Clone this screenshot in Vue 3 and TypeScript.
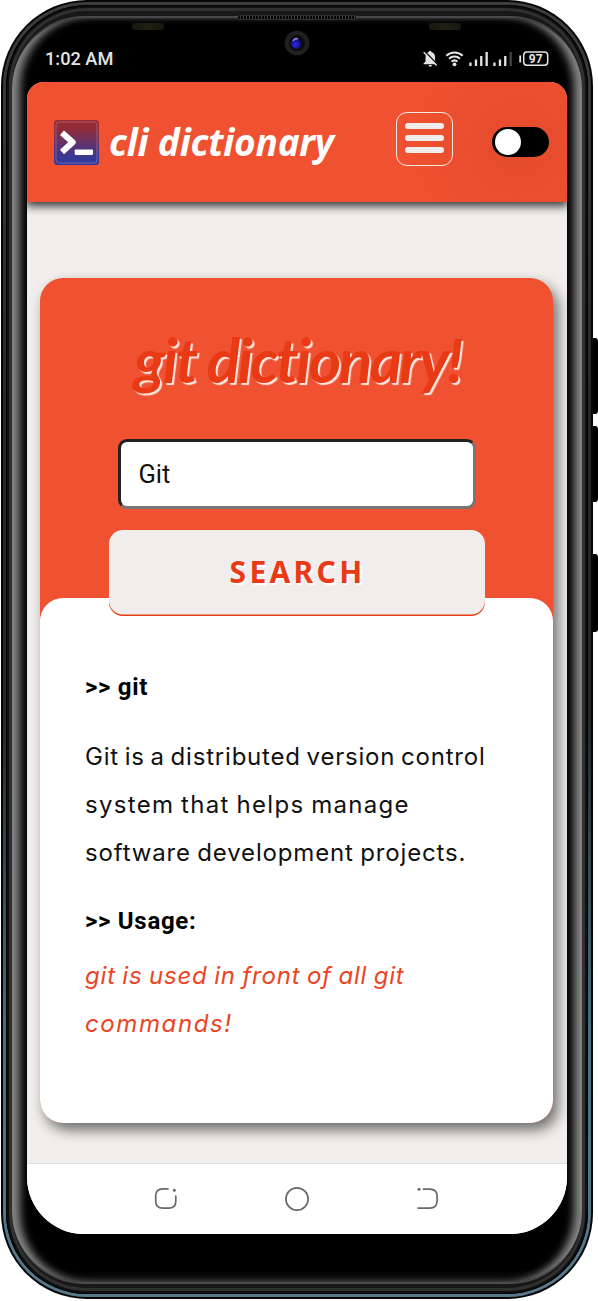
<script setup lang="ts">
import { ref } from 'vue'

const term = ref('Git')
const darkMode = ref(false)
const description: string[] = [
  'Git is a distributed version control',
  'system that helps manage',
  'software development projects.',
]
const usage: string[] = ['git is used in front of all git', 'commands!']
</script>

<template>
  <div class="stage">
    <i class="key key-up"></i>
    <i class="key key-down"></i>
    <i class="key key-power"></i>
    <div class="device">
      <div class="rim">
        <div class="groove">
          <div class="band">
            <div class="glass">
              <span class="speaker"></span>
              <span class="sensor sensor-left"></span>
              <span class="sensor sensor-right"></span>
              <svg class="camera" viewBox="0 0 26 26">
                <defs>
                  <radialGradient id="lens" cx=".4" cy=".65" r=".65">
                    <stop offset="0" stop-color="#2b2be8" />
                    <stop offset=".55" stop-color="#171596" />
                    <stop offset="1" stop-color="#07051d" />
                  </radialGradient>
                </defs>
                <circle cx="13" cy="13" r="12.3" fill="#202020" />
                <circle cx="13" cy="13" r="8" fill="#0c0c10" />
                <circle cx="12.5" cy="13" r="5.7" fill="url(#lens)" />
                <path d="M9 11a4 4 0 0 1 5-2" stroke="#8a86e0" stroke-width="1.6" fill="none" />
              </svg>
              <div class="statusbar">
                <span class="clock">1:02 AM</span>
                <svg class="status-icons" width="128" height="18" viewBox="0 0 128 18">
                  <g fill="#e4e4e4">
                    <path d="M1.500 13.600l2-2.100V7.200C3.500 4.200 5 2.600 7 2.100V1h2.300v1.100c2.400.6 3.800 2.400 3.800 5.100v4.300l2 2.100v.7H1.500zM6.600 15h3.300a1.650 1.650 0 0 1-3.300 0z" />
                    <path d="M2.800 1.400L15.500 14.500" stroke="#000" stroke-width="1.300" />
                    <path d="M1.700 2.200L14.700 15.500" stroke="#e4e4e4" stroke-width="1.300" />
                    <circle cx="32.500" cy="14.300" r="1.900" />
                    <rect x="47.300" y="12.500" width="2.300" height="3.500" />
                    <rect x="52.800" y="9.500" width="2.300" height="6.500" />
                    <rect x="58.100" y="6" width="2.300" height="10" />
                    <rect x="63.500" y="2" width="2.300" height="14" />
                    <rect x="71.300" y="12.500" width="2.300" height="3.500" />
                    <rect x="76.800" y="9.500" width="2.300" height="6.500" />
                    <rect x="82.100" y="6" width="2.300" height="10" />
                    <rect x="87.500" y="2" width="2.300" height="14" fill="#444" />
                    <rect x="97.300" y="5.500" width="1.800" height="7" />
                  </g>
                  <g fill="none" stroke="#e4e4e4" stroke-width="2">
                    <path d="M24.300 5.800a12 12 0 0 1 16.400 0" />
                    <path d="M27 8.700a8.300 8.300 0 0 1 11 0" />
                    <path d="M29.500 11.600a4.700 4.700 0 0 1 6 0" />
                    <rect x="101.700" y="2" width="24" height="13.300" rx="3.200" stroke-width="1.500" />
                  </g>
                  <text x="113.700" y="12.800" class="battery">97</text>
                </svg>
              </div>

              <div class="screen">
                <header class="topbar">
                  <svg class="logo" width="45" height="45" viewBox="0 0 45 45">
                    <defs>
                      <linearGradient id="logo-fill" x1="0" y1="0" x2="0" y2="1">
                        <stop offset="0" stop-color="#9b2b30" />
                        <stop offset=".2" stop-color="#8f2d3a" />
                        <stop offset=".75" stop-color="#43368a" />
                        <stop offset="1" stop-color="#273ba6" />
                      </linearGradient>
                    </defs>
                    <rect width="45" height="45" rx="3.500" fill="url(#logo-fill)" />
                    <rect x="2" y="2" width="41" height="41" rx="3" fill="none" stroke="#c58a98" stroke-width=".5" />
                    <path d="M8 12.700L18.700 22.300L8 32" fill="none" stroke="#fff" stroke-width="6" stroke-linejoin="round" />
                    <rect x="20.700" y="29.500" width="18.300" height="5.400" rx=".8" fill="#fff" />
                  </svg>
                  <span class="brand">cli dictionary</span>
                  <button class="menu" aria-label="Menu"><i></i><i></i><i></i></button>
                  <button class="toggle" :class="{ on: darkMode }" aria-label="Theme" @click="darkMode = !darkMode"><i></i></button>
                </header>

                <main class="page">
                  <section class="card">
                    <div class="search">
                      <h1>git dictionary!</h1>
                      <input v-model="term" type="text" />
                      <button class="submit">SEARCH</button>
                    </div>
                    <div class="result">
                      <h2>&gt;&gt; git</h2>
                      <p class="about"><span v-for="line in description" :key="line">{{ line }}</span></p>
                      <h2 class="usage-title">&gt;&gt; Usage:</h2>
                      <p class="usage"><span v-for="line in usage" :key="line">{{ line }}</span></p>
                    </div>
                  </section>
                </main>

                <nav class="navbar">
                  <svg width="24" height="24" viewBox="0 0 24 24">
                    <path d="M14 1.900H9C4 1.900 1.700 4.200 1.700 9v5C1.700 19 4 21.200 9 21.200h5.500c5 0 7.300-2.200 7.300-7.200V9" />
                    <circle cx="20.300" cy="3.300" r="1.500" class="dot" />
                  </svg>
                  <svg width="24" height="24" viewBox="0 0 24 24"><circle cx="12" cy="12" r="11.100" /></svg>
                  <svg width="24" height="24" viewBox="0 0 24 24">
                    <path d="M7.500 2.200h6.200c5 0 7.400 2.300 7.400 7.300v4.300c0 5-2.400 7.300-7.400 7.300H2" />
                    <circle cx="3" cy="2.300" r="1.500" class="dot" />
                  </svg>
                </nav>
              </div>
            </div>
          </div>
        </div>
      </div>
    </div>
  </div>
</template>

<style>
body {
  background: #fff;
}
</style>

<style scoped>
.stage,
.stage * {
  box-sizing: border-box;
}
.stage {
  position: relative;
  width: 598px;
  height: 1301px;
  overflow: hidden;
  padding: 0 5px 2px 1px;
  background: #fff;
}
.key {
  position: absolute;
  left: 592px;
  width: 6px;
  background: #000;
  border-radius: 0 3px 3px 0;
}
.key-up { top: 338px; height: 76px; }
.key-down { top: 426px; height: 76px; }
.key-power { top: 554px; height: 78px; }
.device {
  position: relative;
  height: 1299px;
  padding: 2px;
  border-radius: 86px;
  background: #050505;
}
.rim {
  height: 100%;
  padding: 3px;
  border-radius: 84px;
  background: linear-gradient(#3c3e3e 0, #292929 30%, #25292b 55%, #487083 80%, #58798a 100%);
}
.groove {
  height: 100%;
  padding: 3px;
  border-radius: 81px;
  background: #101010;
  box-shadow: inset 0 0 0 1px #020202;
}
.band {
  height: 100%;
  padding: 8px 3px 7px;
  border-radius: 78px;
  background: #181818;
  box-shadow: inset 0 0 0 3px #303030;
}
.glass {
  position: relative;
  height: 100%;
  padding: 0 15px;
  border-radius: 72px;
  border-top: 2px solid #484848;
  border-bottom: 2px solid #4d4d4d;
  background: #000;
  box-shadow:
    inset 13px 0 9px -5px #868686,
    inset -13px 0 9px -5px #868686,
    inset 0 4px 8px -4px #282828,
    inset 0 -7px 8px -4px #303030;
}
.speaker {
  position: absolute;
  left: 226px;
  top: -3px;
  width: 118px;
  height: 5px;
  border: 1px solid #303030;
  border-width: 1px 0;
  border-radius: 2px;
  background: repeating-linear-gradient(90deg, #080808 0 2px, #3c3c3c 2px 3px);
}
.sensor {
  position: absolute;
  top: 5px;
  width: 32px;
  height: 7px;
  border-radius: 3px;
  background: linear-gradient(90deg, #171710, #222013, #171710);
}
.sensor-left { left: 120px; }
.sensor-right { left: 417px; }
.camera {
  position: absolute;
  left: 272px;
  top: 12px;
  width: 26px;
  height: 26px;
}
.statusbar {
  display: flex;
  align-items: center;
  justify-content: space-between;
  height: 64px;
  padding: 18px 17px 0 18px;
  color: #e4e4e4;
}
.clock {
  font: 500 18.2px/24px Roboto, sans-serif;
}
.battery {
  font: 700 12px Roboto, sans-serif;
  text-anchor: middle;
  fill: #e4e4e4;
}
.screen {
  display: flex;
  flex-direction: column;
  height: 1152px;
  overflow: hidden;
  border-radius: 17px 17px 57px 57px;
  background: #f1eeed;
}
.topbar {
  position: relative;
  z-index: 1;
  display: flex;
  align-items: center;
  flex: 0 0 120px;
  padding: 0 18px 0 27px;
  background: radial-gradient(circle at 490px 65px, #e34b2c 0, #f05130 110px);
  box-shadow: 0 3px 9px 1px rgba(0, 0, 0, .8);
}
.brand {
  width: 228px;
  margin-left: 10px;
  color: #fff;
  font: italic 700 37px/44px "Noto Sans", sans-serif;
  letter-spacing: -.2px;
  white-space: nowrap;
}
.menu {
  display: flex;
  flex-direction: column;
  align-items: center;
  gap: 6px;
  width: 57px;
  height: 54px;
  flex: none;
  margin: -6px 0 0 59px;
  padding: 10px 0 0;
  border: 1.5px solid #f3e8e5;
  border-radius: 11px;
  background: none;
}
.menu i {
  width: 39px;
  height: 6px;
  border-radius: 3px;
  background: #f2eded;
}
.toggle {
  width: 57px;
  height: 30px;
  margin-left: auto;
  padding: 2px 3px;
  border: 0;
  border-radius: 15px;
  background: #000;
  text-align: left;
}
.toggle i {
  display: block;
  width: 26px;
  height: 26px;
  border-radius: 50%;
  background: #fff;
}
.toggle.on i {
  margin-left: auto;
}
.page {
  flex: 1;
  padding: 76px 14px 0 13px;
}
.card {
  display: flex;
  flex-direction: column;
  height: 845px;
  border-radius: 23px;
  background: #f05130;
  box-shadow: 5px 7px 14px rgba(0, 0, 0, .55);
}
.search {
  display: flex;
  flex-direction: column;
  align-items: center;
  height: 320px;
  flex: none;
}
h1 {
  height: 64px;
  margin: 49px 0 48px 2px;
  color: #e73a15;
  font: italic 700 62px/64px Lato, sans-serif;
  letter-spacing: -2.5px;
  white-space: nowrap;
  text-shadow: 2px 2px 1px #fbe8e3;
}
input {
  width: 358px;
  height: 70px;
  flex: none;
  margin: 0;
  padding: 0 18px;
  border: 3px solid;
  border-color: #222 #767676 #767676 #222;
  border-radius: 9px;
  background: #fff;
  color: #111;
  font: 400 25.5px Roboto, sans-serif;
  outline: 0;
}
.submit {
  position: relative;
  z-index: 1;
  width: 376px;
  height: 86px;
  flex: none;
  margin-top: 21px;
  padding: 0 0 2px 2px;
  border: 0;
  border-radius: 14px;
  background: #f1edec;
  box-shadow: inset 0 -1.5px 0 #e73a15;
  color: #e73a15;
  font: 700 30px/84px "Noto Sans", sans-serif;
  letter-spacing: 3.3px;
  text-shadow: 2px 2px 1px #fff;
}
.result {
  flex: 1;
  padding: 73px 44px 0 45px;
  border-radius: 23px;
  background: #fff;
}
h2 {
  margin: 0;
  color: #000;
  font: 700 24px/32px Roboto, sans-serif;
  letter-spacing: .7px;
}
.about,
.usage {
  margin: 0;
  font: 400 24px/48px Inter, sans-serif;
  white-space: nowrap;
}
.about span,
.usage span {
  display: block;
}
.about {
  margin-top: 30px;
  color: #111;
}
.about span:nth-child(1) {
  letter-spacing: .8px;
  word-spacing: -1.8px;
}
.about span:nth-child(2) {
  letter-spacing: 1.3px;
  word-spacing: -1.2px;
}
.about span:nth-child(3) {
  letter-spacing: .85px;
  word-spacing: -1.2px;
}
.usage-title {
  margin-top: 28px;
}
.usage {
  margin-top: 15px;
  color: #ea4424;
  font-style: italic;
}
.usage span:nth-child(1) {
  letter-spacing: .8px;
  word-spacing: -1px;
}
.usage span:nth-child(2) {
  letter-spacing: 1.6px;
}
.navbar {
  display: flex;
  align-items: center;
  justify-content: space-between;
  flex: 0 0 71px;
  padding: 0 127px;
  border-top: 1px solid #dcdcdc;
  background: #fff;
}
.navbar svg {
  fill: none;
  stroke: #686868;
  stroke-width: 1.7;
  stroke-linecap: round;
}
.navbar .dot {
  fill: #686868;
  stroke: none;
}
</style>
